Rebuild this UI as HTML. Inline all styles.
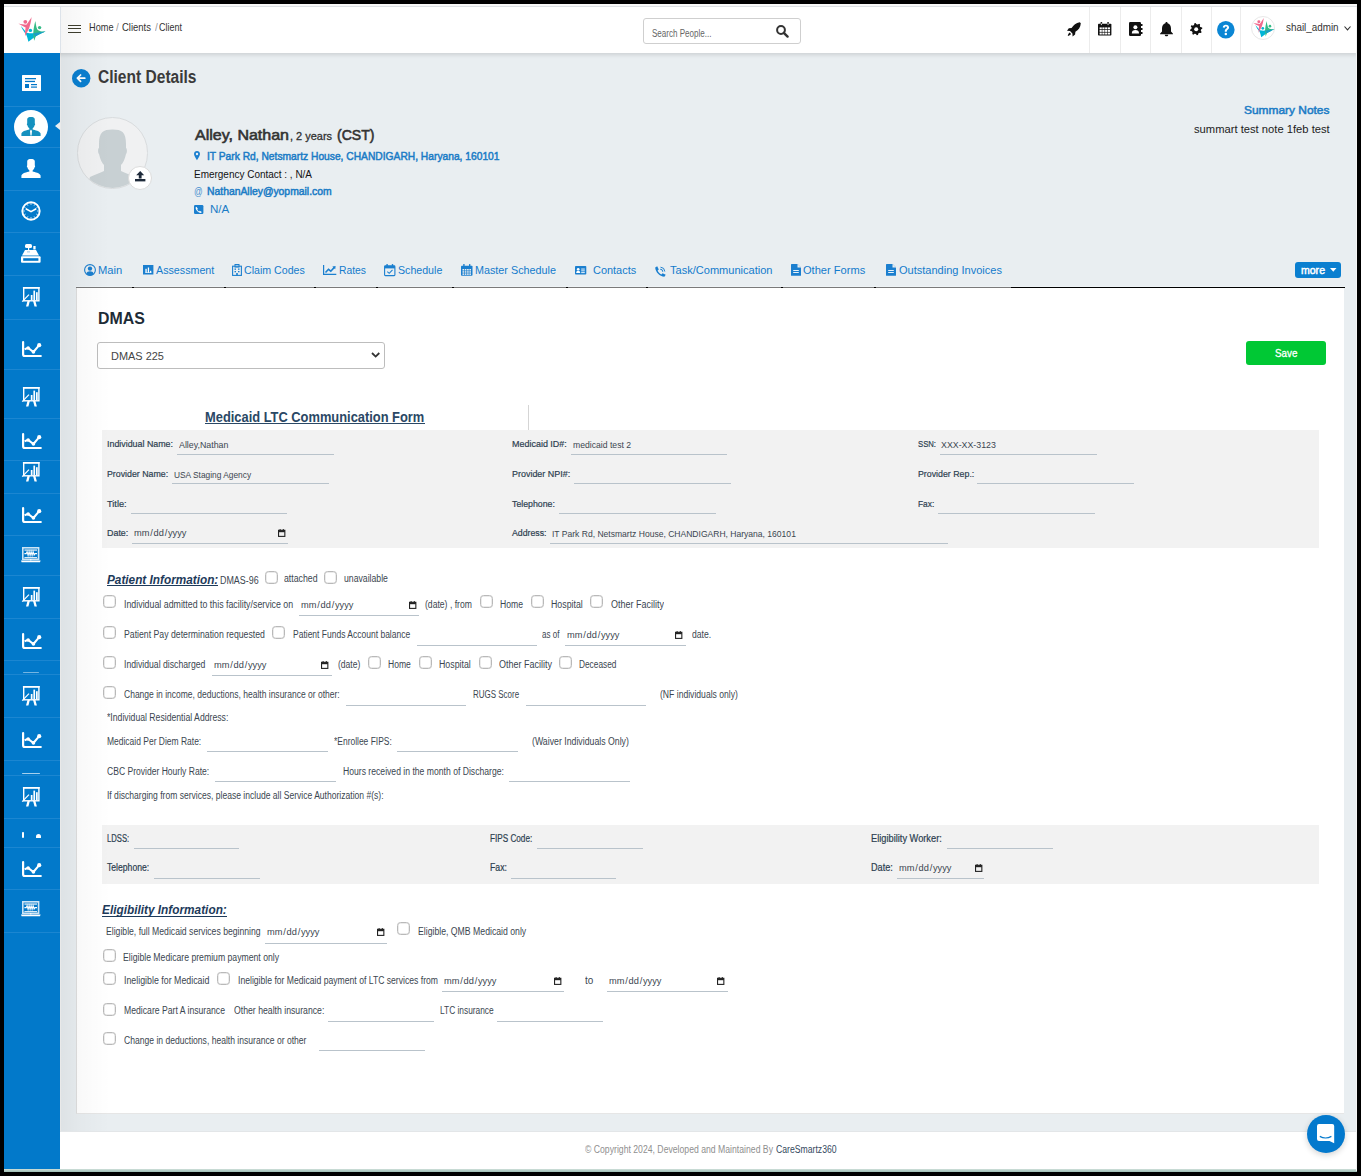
<!DOCTYPE html>
<html><head><meta charset="utf-8"><style>
html,body{margin:0;padding:0;}
body{width:1361px;height:1176px;position:relative;overflow:hidden;background:#000;font-family:"Liberation Sans", sans-serif;}
.a{position:absolute;}
.t{position:absolute;white-space:nowrap;line-height:normal;transform-origin:0 0;display:inline-block;}
.cb{border:1px solid #b9b9b9;border-radius:3.5px;background:#fff;box-shadow:inset 0 0 0 0.5px #d8d8d8;}
svg{overflow:visible;}
</style></head><body>
<div class="a" style="left:4.00px;top:4.00px;width:1353.00px;height:1167.00px;background:#e9eef1;"></div>
<div class="a" style="left:4.00px;top:4.00px;width:1353.00px;height:2.00px;background:#fafafa;"></div>
<div class="a" style="left:4.00px;top:6.00px;width:1353.00px;height:1.00px;background:#dde1e4;z-index:8;"></div>
<div class="a" style="left:4.00px;top:6.00px;width:1353.00px;height:47.00px;background:#ffffff;box-shadow:0 2px 4px rgba(0,0,0,0.12);z-index:2;"></div>
<div class="a" style="left:4.00px;top:6.00px;width:56.00px;height:47.00px;background:#ffffff;z-index:3;"></div>
<div class="a" style="left:59.50px;top:6.00px;width:1.00px;height:47.00px;background:#dde3ea;z-index:3;"></div>
<div class="a" style="left:4.00px;top:53.00px;width:56.00px;height:1116.00px;background:#0279ca;z-index:3;"></div>
<div class="a" style="left:60.00px;top:1131.00px;width:1297.00px;height:38.00px;background:#ffffff;"></div>
<div class="a" style="left:60.00px;top:1131.00px;width:1297.00px;height:1.00px;background:#e3e6e8;"></div>
<div class="a" style="left:4.00px;top:1169.00px;width:1353.00px;height:3.00px;background:linear-gradient(#cfe0da, #9dbdb4);z-index:4;"></div>
<div class="a" style="left:76.00px;top:288.00px;width:1268.00px;height:826.00px;background:#ffffff;box-sizing:border-box;border-left:1px solid #dedede;border-bottom:1px solid #e6e6e6;"></div>
<div class="a" style="left:60.00px;top:53.00px;width:50.00px;height:1078.00px;background:linear-gradient(to right, rgba(0,0,0,0.05), rgba(0,0,0,0.025) 40%, rgba(0,0,0,0));z-index:1;"></div>
<div class="a" style="left:60.00px;top:53.00px;width:1.00px;height:1078.00px;background:#e9e9e9;z-index:1;"></div>
<div class="a" style="left:60.50px;top:7.00px;width:45.00px;height:46.00px;background:linear-gradient(to right, rgba(0,0,0,0.04), rgba(0,0,0,0));z-index:3;"></div>
<div class="a" style="left:76.00px;top:286.00px;width:1269.00px;height:1.00px;background:#eef3f6;"></div>
<div class="a" style="left:1356.00px;top:4.00px;width:1.00px;height:1167.00px;background:#f4f4f4;z-index:4;"></div>
<div class="a" style="left:4.00px;top:105.60px;width:56.00px;height:1.00px;background:#1b86d1;z-index:4;"></div>
<div class="a" style="left:4.00px;top:147.30px;width:56.00px;height:1.00px;background:#1b86d1;z-index:4;"></div>
<div class="a" style="left:4.00px;top:190.40px;width:56.00px;height:1.00px;background:#1b86d1;z-index:4;"></div>
<div class="a" style="left:4.00px;top:232.40px;width:56.00px;height:1.00px;background:#1b86d1;z-index:4;"></div>
<div class="a" style="left:4.00px;top:275.40px;width:56.00px;height:1.00px;background:#1b86d1;z-index:4;"></div>
<div class="a" style="left:4.00px;top:318.50px;width:56.00px;height:1.00px;background:#1b86d1;z-index:4;"></div>
<div class="a" style="left:4.00px;top:369.00px;width:56.00px;height:1.00px;background:#1b86d1;z-index:4;"></div>
<div class="a" style="left:4.00px;top:418.00px;width:56.00px;height:1.00px;background:#1b86d1;z-index:4;"></div>
<div class="a" style="left:4.00px;top:460.40px;width:56.00px;height:1.00px;background:#1b86d1;z-index:4;"></div>
<div class="a" style="left:4.00px;top:493.40px;width:56.00px;height:1.00px;background:#1b86d1;z-index:4;"></div>
<div class="a" style="left:4.00px;top:535.20px;width:56.00px;height:1.00px;background:#1b86d1;z-index:4;"></div>
<div class="a" style="left:4.00px;top:575.00px;width:56.00px;height:1.00px;background:#1b86d1;z-index:4;"></div>
<div class="a" style="left:4.00px;top:618.00px;width:56.00px;height:1.00px;background:#1b86d1;z-index:4;"></div>
<div class="a" style="left:4.00px;top:660.00px;width:56.00px;height:1.00px;background:#1b86d1;z-index:4;"></div>
<div class="a" style="left:4.00px;top:674.00px;width:56.00px;height:1.00px;background:#1b86d1;z-index:4;"></div>
<div class="a" style="left:4.00px;top:717.00px;width:56.00px;height:1.00px;background:#1b86d1;z-index:4;"></div>
<div class="a" style="left:4.00px;top:760.00px;width:56.00px;height:1.00px;background:#1b86d1;z-index:4;"></div>
<div class="a" style="left:4.00px;top:775.00px;width:56.00px;height:1.00px;background:#1b86d1;z-index:4;"></div>
<div class="a" style="left:4.00px;top:818.00px;width:56.00px;height:1.00px;background:#1b86d1;z-index:4;"></div>
<div class="a" style="left:4.00px;top:847.00px;width:56.00px;height:1.00px;background:#1b86d1;z-index:4;"></div>
<div class="a" style="left:4.00px;top:889.00px;width:56.00px;height:1.00px;background:#1b86d1;z-index:4;"></div>
<div class="a" style="left:4.00px;top:932.00px;width:56.00px;height:1.00px;background:#1b86d1;z-index:4;"></div>
<svg class="a" style="left:22.00px;top:75.00px;z-index:5;" width="19" height="16" viewBox="0 0 19 16"><rect x="0" y="0" width="19" height="16" rx="0.5" fill="#fff"/><rect x="3" y="3" width="11" height="1.3" fill="#0277c9"/><rect x="3" y="5.8" width="10" height="1.3" fill="#0277c9"/><rect x="3" y="9" width="4" height="4" fill="#0277c9"/><rect x="9" y="9" width="6" height="1.2" fill="#0277c9"/><rect x="9" y="11.5" width="6" height="1.2" fill="#0277c9"/></svg>
<div class="a" style="left:14px;top:109.7px;width:34px;height:34px;border-radius:50%;background:#fff;z-index:5;"></div>
<svg class="a" style="left:21.30px;top:117.20px;z-index:5;" width="20" height="19" viewBox="0 0 20 19"><path d="M6.2,2.2 C6.2,0.6 8,0 10,0 C12,0 13.8,0.6 13.8,2.2 L13.8,6.5 C14.3,6.8 14.2,8 13.6,8.3 C13.2,10 12.2,11 11.6,11.5 L11.6,12.4 C14,13 19,14 19.6,16.5 L19.6,19 L0.4,19 L0.4,16.5 C1,14 6,13 8.4,12.4 L8.4,11.5 C7.8,11 6.8,10 6.4,8.3 C5.8,8 5.7,6.8 6.2,6.5 Z" fill="#1591bf"/><path d="M10,12.6 L11,14 L10.6,18 L10,19 L9.4,18 L9,14 Z" fill="#fff"/></svg>
<svg class="a" style="left:55.00px;top:122.00px;z-index:5;" width="5" height="8" viewBox="0 0 5 8"><path d="M0,4 L5,0 L5,8 Z" fill="#e9eef1"/></svg>
<svg class="a" style="left:21.00px;top:159.00px;z-index:5;" width="20" height="19" viewBox="0 0 20 19"><path d="M6.2,2.2 C6.2,0.6 8,0 10,0 C12,0 13.8,0.6 13.8,2.2 L13.8,6.5 C14.3,6.8 14.2,8 13.6,8.3 C13.2,10 12.2,11 11.6,11.5 L11.6,12.4 C14,13 19,14 19.6,16.5 L19.6,19 L0.4,19 L0.4,16.5 C1,14 6,13 8.4,12.4 L8.4,11.5 C7.8,11 6.8,10 6.4,8.3 C5.8,8 5.7,6.8 6.2,6.5 Z" fill="#fff"/></svg>
<svg class="a" style="left:20.60px;top:201.00px;z-index:5;" width="20" height="20" viewBox="0 0 20 20"><circle cx="10" cy="10" r="8.7" fill="none" stroke="#fff" stroke-width="1.9"/><line x1="10.00" y1="2.40" x2="10.00" y2="3.70" stroke="#fff" stroke-width="1"/><line x1="13.80" y1="3.42" x2="13.15" y2="4.54" stroke="#fff" stroke-width="1"/><line x1="16.58" y1="6.20" x2="15.46" y2="6.85" stroke="#fff" stroke-width="1"/><line x1="17.60" y1="10.00" x2="16.30" y2="10.00" stroke="#fff" stroke-width="1"/><line x1="16.58" y1="13.80" x2="15.46" y2="13.15" stroke="#fff" stroke-width="1"/><line x1="13.80" y1="16.58" x2="13.15" y2="15.46" stroke="#fff" stroke-width="1"/><line x1="10.00" y1="17.60" x2="10.00" y2="16.30" stroke="#fff" stroke-width="1"/><line x1="6.20" y1="16.58" x2="6.85" y2="15.46" stroke="#fff" stroke-width="1"/><line x1="3.42" y1="13.80" x2="4.54" y2="13.15" stroke="#fff" stroke-width="1"/><line x1="2.40" y1="10.00" x2="3.70" y2="10.00" stroke="#fff" stroke-width="1"/><line x1="3.42" y1="6.20" x2="4.54" y2="6.85" stroke="#fff" stroke-width="1"/><line x1="6.20" y1="3.42" x2="6.85" y2="4.54" stroke="#fff" stroke-width="1"/><path d="M4.8,7.8 L10,10.6 L15.2,7.8" fill="none" stroke="#fff" stroke-width="1.6"/></svg>
<svg class="a" style="left:21.20px;top:244.00px;z-index:5;" width="20" height="19" viewBox="0 0 20 19"><rect x="4" y="0" width="7" height="4" rx="1.5" fill="#fff"/><rect x="12.3" y="2" width="2.3" height="3.5" fill="#fff"/><rect x="7" y="4" width="1.2" height="2" fill="#fff"/><path d="M4,6 L15,6 L18,11.5 L1,11.5 Z" fill="#fff"/><rect x="6" y="7.5" width="3" height="0.8" fill="#0277c9" opacity="0.5"/><rect x="0" y="12.3" width="19.6" height="6.4" rx="1" fill="#fff"/><rect x="2.2" y="14.2" width="15.2" height="2.6" fill="#0277c9"/></svg>
<svg class="a" style="left:22.00px;top:286.60px;z-index:5;" width="18" height="19.5" viewBox="0 0 18 19.5"><rect x="1.7" y="0.8" width="15.2" height="13" fill="none" stroke="#fff" stroke-width="1.4"/><rect x="0.9" y="0" width="16.8" height="1.6" fill="#fff"/><rect x="8.8" y="8" width="1.7" height="5.2" fill="#fff"/><rect x="11.4" y="3.6" width="1.7" height="9.6" fill="#fff"/><rect x="14" y="5.2" width="1.7" height="8" fill="#fff"/><path d="M0.2,14.6 L7,7.6" stroke="#fff" stroke-width="1.2"/><path d="M5.6,13.8 L4,19.4 L6.4,19.4 L7.9,13.8 Z M11,13.8 L12.5,19.4 L14.9,19.4 L13.3,13.8 Z" fill="#fff"/></svg>
<svg class="a" style="left:22.00px;top:387.10px;z-index:5;" width="18" height="19.5" viewBox="0 0 18 19.5"><rect x="1.7" y="0.8" width="15.2" height="13" fill="none" stroke="#fff" stroke-width="1.4"/><rect x="0.9" y="0" width="16.8" height="1.6" fill="#fff"/><rect x="8.8" y="8" width="1.7" height="5.2" fill="#fff"/><rect x="11.4" y="3.6" width="1.7" height="9.6" fill="#fff"/><rect x="14" y="5.2" width="1.7" height="8" fill="#fff"/><path d="M0.2,14.6 L7,7.6" stroke="#fff" stroke-width="1.2"/><path d="M5.6,13.8 L4,19.4 L6.4,19.4 L7.9,13.8 Z M11,13.8 L12.5,19.4 L14.9,19.4 L13.3,13.8 Z" fill="#fff"/></svg>
<svg class="a" style="left:22.00px;top:461.90px;z-index:5;" width="18" height="19.5" viewBox="0 0 18 19.5"><rect x="1.7" y="0.8" width="15.2" height="13" fill="none" stroke="#fff" stroke-width="1.4"/><rect x="0.9" y="0" width="16.8" height="1.6" fill="#fff"/><rect x="8.8" y="8" width="1.7" height="5.2" fill="#fff"/><rect x="11.4" y="3.6" width="1.7" height="9.6" fill="#fff"/><rect x="14" y="5.2" width="1.7" height="8" fill="#fff"/><path d="M0.2,14.6 L7,7.6" stroke="#fff" stroke-width="1.2"/><path d="M5.6,13.8 L4,19.4 L6.4,19.4 L7.9,13.8 Z M11,13.8 L12.5,19.4 L14.9,19.4 L13.3,13.8 Z" fill="#fff"/></svg>
<svg class="a" style="left:22.00px;top:586.60px;z-index:5;" width="18" height="19.5" viewBox="0 0 18 19.5"><rect x="1.7" y="0.8" width="15.2" height="13" fill="none" stroke="#fff" stroke-width="1.4"/><rect x="0.9" y="0" width="16.8" height="1.6" fill="#fff"/><rect x="8.8" y="8" width="1.7" height="5.2" fill="#fff"/><rect x="11.4" y="3.6" width="1.7" height="9.6" fill="#fff"/><rect x="14" y="5.2" width="1.7" height="8" fill="#fff"/><path d="M0.2,14.6 L7,7.6" stroke="#fff" stroke-width="1.2"/><path d="M5.6,13.8 L4,19.4 L6.4,19.4 L7.9,13.8 Z M11,13.8 L12.5,19.4 L14.9,19.4 L13.3,13.8 Z" fill="#fff"/></svg>
<svg class="a" style="left:22.00px;top:685.80px;z-index:5;" width="18" height="19.5" viewBox="0 0 18 19.5"><rect x="1.7" y="0.8" width="15.2" height="13" fill="none" stroke="#fff" stroke-width="1.4"/><rect x="0.9" y="0" width="16.8" height="1.6" fill="#fff"/><rect x="8.8" y="8" width="1.7" height="5.2" fill="#fff"/><rect x="11.4" y="3.6" width="1.7" height="9.6" fill="#fff"/><rect x="14" y="5.2" width="1.7" height="8" fill="#fff"/><path d="M0.2,14.6 L7,7.6" stroke="#fff" stroke-width="1.2"/><path d="M5.6,13.8 L4,19.4 L6.4,19.4 L7.9,13.8 Z M11,13.8 L12.5,19.4 L14.9,19.4 L13.3,13.8 Z" fill="#fff"/></svg>
<svg class="a" style="left:22.00px;top:787.10px;z-index:5;" width="18" height="19.5" viewBox="0 0 18 19.5"><rect x="1.7" y="0.8" width="15.2" height="13" fill="none" stroke="#fff" stroke-width="1.4"/><rect x="0.9" y="0" width="16.8" height="1.6" fill="#fff"/><rect x="8.8" y="8" width="1.7" height="5.2" fill="#fff"/><rect x="11.4" y="3.6" width="1.7" height="9.6" fill="#fff"/><rect x="14" y="5.2" width="1.7" height="8" fill="#fff"/><path d="M0.2,14.6 L7,7.6" stroke="#fff" stroke-width="1.2"/><path d="M5.6,13.8 L4,19.4 L6.4,19.4 L7.9,13.8 Z M11,13.8 L12.5,19.4 L14.9,19.4 L13.3,13.8 Z" fill="#fff"/></svg>
<svg class="a" style="left:21.90px;top:341.40px;z-index:5;" width="19.5" height="16.5" viewBox="0 0 19.5 16.5"><path d="M1.1,1 L1.1,13.2 Q1.1,15 2.9,15 L18.8,15" fill="none" stroke="#fff" stroke-width="2.2" stroke-linecap="round" stroke-linejoin="round"/><path d="M2.6,8.2 L6.1,6.9 L11.4,11 L17,4.4" fill="none" stroke="#fff" stroke-width="2" stroke-linejoin="round"/><circle cx="6.1" cy="7" r="1.8" fill="#fff"/><circle cx="11.4" cy="10.9" r="1.8" fill="#fff"/><circle cx="17.2" cy="4.2" r="2.1" fill="#fff"/></svg>
<svg class="a" style="left:21.90px;top:432.70px;z-index:5;" width="19.5" height="16.5" viewBox="0 0 19.5 16.5"><path d="M1.1,1 L1.1,13.2 Q1.1,15 2.9,15 L18.8,15" fill="none" stroke="#fff" stroke-width="2.2" stroke-linecap="round" stroke-linejoin="round"/><path d="M2.6,8.2 L6.1,6.9 L11.4,11 L17,4.4" fill="none" stroke="#fff" stroke-width="2" stroke-linejoin="round"/><circle cx="6.1" cy="7" r="1.8" fill="#fff"/><circle cx="11.4" cy="10.9" r="1.8" fill="#fff"/><circle cx="17.2" cy="4.2" r="2.1" fill="#fff"/></svg>
<svg class="a" style="left:21.90px;top:507.30px;z-index:5;" width="19.5" height="16.5" viewBox="0 0 19.5 16.5"><path d="M1.1,1 L1.1,13.2 Q1.1,15 2.9,15 L18.8,15" fill="none" stroke="#fff" stroke-width="2.2" stroke-linecap="round" stroke-linejoin="round"/><path d="M2.6,8.2 L6.1,6.9 L11.4,11 L17,4.4" fill="none" stroke="#fff" stroke-width="2" stroke-linejoin="round"/><circle cx="6.1" cy="7" r="1.8" fill="#fff"/><circle cx="11.4" cy="10.9" r="1.8" fill="#fff"/><circle cx="17.2" cy="4.2" r="2.1" fill="#fff"/></svg>
<svg class="a" style="left:21.90px;top:632.60px;z-index:5;" width="19.5" height="16.5" viewBox="0 0 19.5 16.5"><path d="M1.1,1 L1.1,13.2 Q1.1,15 2.9,15 L18.8,15" fill="none" stroke="#fff" stroke-width="2.2" stroke-linecap="round" stroke-linejoin="round"/><path d="M2.6,8.2 L6.1,6.9 L11.4,11 L17,4.4" fill="none" stroke="#fff" stroke-width="2" stroke-linejoin="round"/><circle cx="6.1" cy="7" r="1.8" fill="#fff"/><circle cx="11.4" cy="10.9" r="1.8" fill="#fff"/><circle cx="17.2" cy="4.2" r="2.1" fill="#fff"/></svg>
<svg class="a" style="left:21.90px;top:732.40px;z-index:5;" width="19.5" height="16.5" viewBox="0 0 19.5 16.5"><path d="M1.1,1 L1.1,13.2 Q1.1,15 2.9,15 L18.8,15" fill="none" stroke="#fff" stroke-width="2.2" stroke-linecap="round" stroke-linejoin="round"/><path d="M2.6,8.2 L6.1,6.9 L11.4,11 L17,4.4" fill="none" stroke="#fff" stroke-width="2" stroke-linejoin="round"/><circle cx="6.1" cy="7" r="1.8" fill="#fff"/><circle cx="11.4" cy="10.9" r="1.8" fill="#fff"/><circle cx="17.2" cy="4.2" r="2.1" fill="#fff"/></svg>
<svg class="a" style="left:21.90px;top:861.30px;z-index:5;" width="19.5" height="16.5" viewBox="0 0 19.5 16.5"><path d="M1.1,1 L1.1,13.2 Q1.1,15 2.9,15 L18.8,15" fill="none" stroke="#fff" stroke-width="2.2" stroke-linecap="round" stroke-linejoin="round"/><path d="M2.6,8.2 L6.1,6.9 L11.4,11 L17,4.4" fill="none" stroke="#fff" stroke-width="2" stroke-linejoin="round"/><circle cx="6.1" cy="7" r="1.8" fill="#fff"/><circle cx="11.4" cy="10.9" r="1.8" fill="#fff"/><circle cx="17.2" cy="4.2" r="2.1" fill="#fff"/></svg>
<svg class="a" style="left:21.20px;top:546.90px;z-index:5;" width="20" height="16" viewBox="0 0 20 16"><rect x="1.8" y="0.8" width="15.8" height="11.5" fill="none" stroke="#fff" stroke-width="1.6" opacity="0.8"/><rect x="3.4" y="2.5" width="12.6" height="1.1" fill="#fff"/><rect x="3.4" y="10" width="12.6" height="1.1" fill="#fff" opacity="0.85"/><path d="M3.4,6.6 L5.2,6.6 L6.1,4.6 L7.1,8.4 L8.1,4.6 L9.1,8.4 L10.1,4.6 L11.1,8.4 L12.1,4.6 L13.1,8 L14,6.6 L16,6.6" fill="none" stroke="#fff" stroke-width="1.05"/><rect x="9.3" y="12" width="1" height="1.5" fill="#fff"/><path d="M0,13.5 L19.6,13.5 L19,15.2 L0.6,15.2 Z" fill="#fff"/></svg>
<svg class="a" style="left:21.20px;top:901.10px;z-index:5;" width="20" height="16" viewBox="0 0 20 16"><rect x="1.8" y="0.8" width="15.8" height="11.5" fill="none" stroke="#fff" stroke-width="1.6" opacity="0.8"/><rect x="3.4" y="2.5" width="12.6" height="1.1" fill="#fff"/><rect x="3.4" y="10" width="12.6" height="1.1" fill="#fff" opacity="0.85"/><path d="M3.4,6.6 L5.2,6.6 L6.1,4.6 L7.1,8.4 L8.1,4.6 L9.1,8.4 L10.1,4.6 L11.1,8.4 L12.1,4.6 L13.1,8 L14,6.6 L16,6.6" fill="none" stroke="#fff" stroke-width="1.05"/><rect x="9.3" y="12" width="1" height="1.5" fill="#fff"/><path d="M0,13.5 L19.6,13.5 L19,15.2 L0.6,15.2 Z" fill="#fff"/></svg>
<div class="a" style="left:23.00px;top:672.00px;width:16.00px;height:1.20px;background:#fff;z-index:5;opacity:0.45;border-radius:1px;"></div>
<div class="a" style="left:22.00px;top:772.60px;width:18.00px;height:1.40px;background:#fff;z-index:5;opacity:0.65;border-radius:1px;"></div>
<div class="a" style="left:21.8px;top:832px;width:2.6px;height:6px;border-radius:1px 1px 1.3px 1.3px;background:#fff;z-index:5;"></div>
<div class="a" style="left:36px;top:834px;width:5px;height:4px;border-radius:2.5px 2.5px 0.5px 0.5px;background:#fff;z-index:5;"></div>
<div class="a" style="left:68.20px;top:24.65px;width:12.50px;height:1.30px;background:#3d3d2d;z-index:5;"></div>
<div class="a" style="left:68.20px;top:28.05px;width:12.50px;height:1.30px;background:#3d3d2d;z-index:5;"></div>
<div class="a" style="left:68.20px;top:31.65px;width:12.50px;height:1.30px;background:#3d3d2d;z-index:5;"></div>
<span class="t" id="t0" style="left:88.50px;top:21.88px;font-size:10.30px;font-weight:400;color:#333;transform:scaleX(0.8919);z-index:5;">Home</span>
<span class="t" id="t1" style="left:116.30px;top:21.88px;font-size:10.30px;font-weight:400;color:#9a9a9a;transform:scaleX(0.9739);z-index:5;">/</span>
<span class="t" id="t2" style="left:122.40px;top:21.88px;font-size:10.30px;font-weight:400;color:#333;transform:scaleX(0.9179);z-index:5;">Clients</span>
<span class="t" id="t3" style="left:154.50px;top:21.88px;font-size:10.30px;font-weight:400;color:#9a9a9a;transform:scaleX(0.9739);z-index:5;">/</span>
<span class="t" id="t4" style="left:159.10px;top:21.88px;font-size:10.30px;font-weight:400;color:#333;transform:scaleX(0.8698);z-index:5;">Client</span>
<div class="a" style="left:642.5px;top:17.5px;width:156px;height:24px;border:1px solid #cfcfcf;border-radius:3px;background:#fff;z-index:5;"></div>
<span class="t" id="t5" style="left:651.50px;top:28.05px;font-size:10.00px;font-weight:400;color:#666;transform:scaleX(0.8047);z-index:5;">Search People...</span>
<div class="a" style="left:1089.00px;top:6.00px;width:1.00px;height:47.00px;background:#ececec;z-index:5;"></div>
<div class="a" style="left:1120.00px;top:6.00px;width:1.00px;height:47.00px;background:#ececec;z-index:5;"></div>
<div class="a" style="left:1150.00px;top:6.00px;width:1.00px;height:47.00px;background:#ececec;z-index:5;"></div>
<div class="a" style="left:1181.00px;top:6.00px;width:1.00px;height:47.00px;background:#ececec;z-index:5;"></div>
<div class="a" style="left:1211.00px;top:6.00px;width:1.00px;height:47.00px;background:#ececec;z-index:5;"></div>
<div class="a" style="left:1240.00px;top:6.00px;width:1.00px;height:47.00px;background:#ececec;z-index:5;"></div>
<span class="t" id="t6" style="left:1286.20px;top:21.95px;font-size:10.00px;font-weight:400;color:#333;transform:scaleX(0.9855);z-index:5;">shail_admin</span>
<svg class="a" style="left:1344.00px;top:26.40px;z-index:5;" width="7" height="4.4" viewBox="0 0 7 4.4"><path d="M0.5,0.5 L3.5,3.9 L6.5,0.5" fill="none" stroke="#333" stroke-width="1.1"/></svg>
<svg class="a" style="left:14.00px;top:12.00px;z-index:6;" width="36" height="36" viewBox="0 0 36 36"><g transform="scale(1)"><path d="M7,14.1 C9,16.5 11,19 12.8,20.8 C15,21.3 17,21.4 19,21.3 L31.5,19.6 C27,21.5 23,23.5 20,25.5 C18,27 16,28.5 14.4,29.7 C13.8,27 13,24.5 12.2,22.5 C10,20 8,17 7,14.1 Z" fill="#00b4d6"/><circle cx="16.4" cy="18.4" r="1.7" fill="#00b4d6"/><path d="M21.4,8.9 C21.8,12 22.3,15 23.2,17.3 C24.5,18.7 26,19.3 28,19.5 L31.5,19.6 C28,20.8 25,22 22.2,23 C21.5,25 20.8,27 20.2,28.8 C19.6,26 19.3,23 19.3,20.5 C19.6,16.5 20.3,12.5 21.4,8.9 Z" fill="#34bb87"/><path d="M19.4,21.2 L31.5,19.6 C27,21.5 24,23 21.2,24.6 Z" fill="#1b9fc4"/><circle cx="25.6" cy="15.6" r="1.7" fill="#34bb87"/><path d="M4.3,11.6 C7,12.3 10,12.6 12.3,12.8 C14.5,10 16.5,7 17.6,5 C17.2,9 16.3,13 15,16.5 C13.5,19.5 12,22 11,24.2 C11,21 11.3,18 11.6,15.5 C9,14.5 6.5,13 4.3,11.6 Z" fill="#f06a8e"/><circle cx="11.3" cy="9.8" r="1.9" fill="#f06a8e"/></g></svg>
<div class="a" style="left:1251px;top:16.2px;width:22px;height:22px;border:1px solid #e8e8e8;border-radius:50%;background:#fff;z-index:5;"></div>
<svg class="a" style="left:1249.50px;top:14.10px;z-index:6;" width="28.08" height="28.08" viewBox="0 0 28.08 28.08"><g transform="scale(0.78)"><path d="M7,14.1 C9,16.5 11,19 12.8,20.8 C15,21.3 17,21.4 19,21.3 L31.5,19.6 C27,21.5 23,23.5 20,25.5 C18,27 16,28.5 14.4,29.7 C13.8,27 13,24.5 12.2,22.5 C10,20 8,17 7,14.1 Z" fill="#00b4d6"/><circle cx="16.4" cy="18.4" r="1.7" fill="#00b4d6"/><path d="M21.4,8.9 C21.8,12 22.3,15 23.2,17.3 C24.5,18.7 26,19.3 28,19.5 L31.5,19.6 C28,20.8 25,22 22.2,23 C21.5,25 20.8,27 20.2,28.8 C19.6,26 19.3,23 19.3,20.5 C19.6,16.5 20.3,12.5 21.4,8.9 Z" fill="#34bb87"/><path d="M19.4,21.2 L31.5,19.6 C27,21.5 24,23 21.2,24.6 Z" fill="#1b9fc4"/><circle cx="25.6" cy="15.6" r="1.7" fill="#34bb87"/><path d="M4.3,11.6 C7,12.3 10,12.6 12.3,12.8 C14.5,10 16.5,7 17.6,5 C17.2,9 16.3,13 15,16.5 C13.5,19.5 12,22 11,24.2 C11,21 11.3,18 11.6,15.5 C9,14.5 6.5,13 4.3,11.6 Z" fill="#f06a8e"/><circle cx="11.3" cy="9.8" r="1.9" fill="#f06a8e"/></g></svg>
<svg class="a" style="left:1067.00px;top:21.90px;z-index:5;" width="14" height="14.6" viewBox="0 0 14 14.6"><path d="M12.8,0.2 C9,0.6 6.5,3 4.6,6 L1.8,6.3 L0,8.8 L3,9 L5.4,11.4 L5.6,14.4 L8.1,12.6 L8.4,9.8 C11.4,7.9 13.6,5.4 13.8,1.2 Z M2.8,10.6 C1.6,11.2 1,12.6 0.8,13.9 C2,13.7 3.4,13.1 4,11.9 Z" fill="#111"/></svg>
<svg class="a" style="left:1098.00px;top:22.20px;z-index:5;" width="13.4" height="13.5" viewBox="0 0 13.4 13.5"><rect x="0" y="1.8" width="13.4" height="11.7" rx="0.8" fill="#111"/><rect x="1.60" y="5.40" width="2.2" height="1.9" fill="#fff"/><rect x="1.60" y="8.00" width="2.2" height="1.9" fill="#fff"/><rect x="1.60" y="10.60" width="2.2" height="1.9" fill="#fff"/><rect x="4.35" y="5.40" width="2.2" height="1.9" fill="#fff"/><rect x="4.35" y="8.00" width="2.2" height="1.9" fill="#fff"/><rect x="4.35" y="10.60" width="2.2" height="1.9" fill="#fff"/><rect x="7.10" y="5.40" width="2.2" height="1.9" fill="#fff"/><rect x="7.10" y="8.00" width="2.2" height="1.9" fill="#fff"/><rect x="7.10" y="10.60" width="2.2" height="1.9" fill="#fff"/><rect x="9.85" y="5.40" width="2.2" height="1.9" fill="#fff"/><rect x="9.85" y="8.00" width="2.2" height="1.9" fill="#fff"/><rect x="9.85" y="10.60" width="2.2" height="1.9" fill="#fff"/><rect x="2.6" y="0" width="1.5" height="3.5" rx="0.5" fill="#111"/><rect x="9.3" y="0" width="1.5" height="3.5" rx="0.5" fill="#111"/><rect x="2.9" y="1.5" width="0.9" height="1.6" fill="#fff"/><rect x="9.6" y="1.5" width="0.9" height="1.6" fill="#fff"/></svg>
<svg class="a" style="left:1128.90px;top:21.90px;z-index:5;" width="13.5" height="14" viewBox="0 0 13.5 14"><rect x="0" y="0" width="12" height="14" rx="1.2" fill="#111"/><rect x="12" y="2" width="1.5" height="2" fill="#111"/><rect x="12" y="6" width="1.5" height="2" fill="#111"/><rect x="12" y="10" width="1.5" height="2" fill="#111"/><circle cx="6.4" cy="5.2" r="2" fill="#fff"/><path d="M2.8,11.4 C2.8,8.8 4.2,8 6.4,8 C8.6,8 10,8.8 10,11.4 Z" fill="#fff"/></svg>
<svg class="a" style="left:1159.50px;top:21.90px;z-index:5;" width="13" height="14.3" viewBox="0 0 13 14.3"><path d="M6.5,0 C7.3,0 7.6,0.6 7.6,1.3 C10,1.9 11,4 11,6.5 L11,9.5 L13,11.8 L13,12.3 L0,12.3 L0,11.8 L2,9.5 L2,6.5 C2,4 3,1.9 5.4,1.3 C5.4,0.6 5.7,0 6.5,0 Z M4.8,12.8 L8.2,12.8 C8.2,14 7.4,14.3 6.5,14.3 C5.6,14.3 4.8,14 4.8,12.8 Z" fill="#111"/></svg>
<svg class="a" style="left:1190.40px;top:22.80px;z-index:5;" width="12.4" height="12.4" viewBox="0 0 12.4 12.4"><polygon points="12.13,4.40 12.37,5.59 10.78,6.65 10.60,7.54 11.67,9.12 10.99,10.13 9.12,9.76 8.37,10.26 8.00,12.13 6.81,12.37 5.75,10.78 4.86,10.60 3.28,11.67 2.27,10.99 2.64,9.12 2.14,8.37 0.27,8.00 0.03,6.81 1.62,5.75 1.80,4.86 0.73,3.28 1.41,2.27 3.28,2.64 4.03,2.14 4.40,0.27 5.59,0.03 6.65,1.62 7.54,1.80 9.12,0.73 10.13,1.41 9.76,3.28 10.26,4.03" fill="#111"/><circle cx="6.2" cy="6.2" r="4.6" fill="#111"/><circle cx="6.2" cy="6.2" r="2" fill="#fff"/></svg>
<svg class="a" style="left:1217.40px;top:20.80px;z-index:5;" width="17.6" height="17.6" viewBox="0 0 17.6 17.6"><circle cx="8.8" cy="8.8" r="8.8" fill="#0b86d4"/><path d="M5.8,6.6 C5.8,4.6 7.2,3.7 8.9,3.7 C10.8,3.7 12.1,4.8 12.1,6.5 C12.1,8.6 9.8,8.7 9.8,10.3 L9.8,10.8 L7.8,10.8 L7.8,10.1 C7.8,7.8 10,7.9 10,6.6 C10,5.9 9.5,5.5 8.9,5.5 C8.2,5.5 7.8,6 7.8,6.8 Z" fill="#fff"/><circle cx="8.8" cy="13" r="1.25" fill="#fff"/></svg>
<svg class="a" style="left:775.50px;top:25.00px;z-index:5;" width="12.5" height="12.5" viewBox="0 0 12.5 12.5"><circle cx="5" cy="5" r="3.9" fill="none" stroke="#333" stroke-width="2"/><path d="M7.8,7.8 L11.6,11.6" stroke="#333" stroke-width="2.4" stroke-linecap="round"/></svg>
<span class="t" id="t7" style="left:97.50px;top:67.16px;font-size:17.50px;font-weight:700;color:#3a3a3a;transform:scaleX(0.8884);">Client Details</span>
<span class="t" id="t8" style="left:194.60px;top:126.33px;font-size:15.00px;font-weight:400;color:#333;transform:scaleX(1.0669);-webkit-text-stroke:0.6px currentColor;">Alley, Nathan</span>
<span class="t" id="t9" style="left:290.00px;top:129.94px;font-size:11.00px;font-weight:400;color:#333;transform:scaleX(0.9956);-webkit-text-stroke:0.3px currentColor;">, 2 years</span>
<span class="t" id="t10" style="left:336.50px;top:126.33px;font-size:15.00px;font-weight:400;color:#333;transform:scaleX(0.9375);-webkit-text-stroke:0.6px currentColor;">(CST)</span>
<span class="t" id="t11" style="left:206.60px;top:149.64px;font-size:11.00px;font-weight:400;color:#1b7cc6;transform:scaleX(0.9314);-webkit-text-stroke:0.5px currentColor;">IT Park Rd, Netsmartz House, CHANDIGARH, Haryana, 160101</span>
<span class="t" id="t12" style="left:194.00px;top:167.54px;font-size:11.00px;font-weight:400;color:#111;transform:scaleX(0.9062);">Emergency Contact : , N/A</span>
<span class="t" id="t13" style="left:207.40px;top:184.90px;font-size:10.50px;font-weight:400;color:#1b7cc6;transform:scaleX(0.9872);-webkit-text-stroke:0.5px currentColor;">NathanAlley@yopmail.com</span>
<span class="t" id="t14" style="left:209.70px;top:203.24px;font-size:11.00px;font-weight:400;color:#1b7cc6;transform:scaleX(1.0521);">N/A</span>
<svg class="a" style="left:71.80px;top:68.60px;" width="18.4" height="18.4" viewBox="0 0 18.4 18.4"><circle cx="9.2" cy="9.2" r="9.2" fill="#0a7fd0"/><path d="M12.8,9.2 L5.5,9.2 M8.6,6 L5.4,9.2 L8.6,12.4" fill="none" stroke="#fff" stroke-width="1.7" stroke-linecap="round" stroke-linejoin="round"/></svg>
<div class="a" style="left:76.5px;top:117px;width:69.5px;height:69.5px;border:1px solid #d9dcde;border-radius:50%;background:#f0f1f2;overflow:hidden;"><svg width="70" height="70" viewBox="0 0 70 70" style="position:absolute;left:0;top:0;"><path d="M21,26 C21,14 25,11.5 34.5,11.5 C44,11.5 48,14 48,26 L48,30 C49.2,30.5 49.2,35 48,36 C47,41 45,45 43,47 L43,53 C47,55 53,57 57,59 L62,75 L7,75 L12,59 C16,57 22,55 26,53 L26,47 C24,45 22,41 21,36 C19.8,35 19.8,30.5 21,30 Z" fill="#c8d0d3"/></svg></div>
<div class="a" style="left:128.3px;top:166.2px;width:22px;height:22px;border:1px solid #dcdcdc;border-radius:50%;background:#fff;"></div>
<svg class="a" style="left:134.80px;top:170.60px;" width="10.4" height="10.4" viewBox="0 0 10.4 10.4"><path d="M5.2,0 L9.2,4.2 L6.6,4.2 L6.6,7.4 L3.8,7.4 L3.8,4.2 L1.2,4.2 Z" fill="#1e2a3a"/><rect x="0" y="8" width="10.4" height="2.4" fill="#1e2a3a"/></svg>
<svg class="a" style="left:194.00px;top:150.60px;" width="6" height="9.2" viewBox="0 0 6 9.2"><path d="M3,0 C4.7,0 6,1.3 6,3 C6,4.8 3,9.2 3,9.2 C3,9.2 0,4.8 0,3 C0,1.3 1.3,0 3,0 Z M3,1.8 A1.2,1.2 0 1 0 3,4.2 A1.2,1.2 0 1 0 3,1.8 Z" fill="#1b7fcf" fill-rule="evenodd"/></svg>
<span class="t" id="t15" style="left:194.00px;top:184.90px;font-size:10.50px;font-weight:400;color:#4a90d0;transform:scaleX(0.8059);">@</span>
<svg class="a" style="left:194.00px;top:205.00px;" width="9.4" height="9" viewBox="0 0 9.4 9"><rect x="0" y="0" width="9.4" height="9" rx="1.2" fill="#1b7fcf"/><path d="M2.5,1.8 L3.9,3.9 L3.2,4.6 C3.7,5.5 4.3,6.1 5.1,6.5 L5.8,5.8 L7.8,7 L7,8 C4.4,8 1.6,5.2 1.6,2.6 Z" fill="#fff"/></svg>
<span class="t" id="t16" style="left:1244.00px;top:103.59px;font-size:11.50px;font-weight:400;color:#1b7cc6;transform:scaleX(1.0359);-webkit-text-stroke:0.5px currentColor;">Summary Notes</span>
<span class="t" id="t17" style="left:1193.70px;top:122.64px;font-size:11.00px;font-weight:400;color:#222;transform:scaleX(1.0180);">summart test note 1feb test</span>
<span class="t" id="t18" style="left:98.00px;top:262.60px;font-size:11.60px;font-weight:400;color:#137bcc;transform:scaleX(0.9626);">Main</span>
<span class="t" id="t19" style="left:155.60px;top:262.60px;font-size:11.60px;font-weight:400;color:#137bcc;transform:scaleX(0.9231);">Assessment</span>
<span class="t" id="t20" style="left:243.70px;top:262.60px;font-size:11.60px;font-weight:400;color:#137bcc;transform:scaleX(0.9160);">Claim Codes</span>
<span class="t" id="t21" style="left:339.00px;top:262.60px;font-size:11.60px;font-weight:400;color:#137bcc;transform:scaleX(0.8912);">Rates</span>
<span class="t" id="t22" style="left:398.00px;top:262.60px;font-size:11.60px;font-weight:400;color:#137bcc;transform:scaleX(0.9161);">Schedule</span>
<span class="t" id="t23" style="left:474.70px;top:262.60px;font-size:11.60px;font-weight:400;color:#137bcc;transform:scaleX(0.9299);">Master Schedule</span>
<span class="t" id="t24" style="left:593.20px;top:262.60px;font-size:11.60px;font-weight:400;color:#137bcc;transform:scaleX(0.9439);">Contacts</span>
<span class="t" id="t25" style="left:669.50px;top:262.60px;font-size:11.60px;font-weight:400;color:#137bcc;transform:scaleX(0.9525);">Task/Communication</span>
<span class="t" id="t26" style="left:803.30px;top:262.60px;font-size:11.60px;font-weight:400;color:#137bcc;transform:scaleX(0.9560);">Other Forms</span>
<span class="t" id="t27" style="left:898.60px;top:262.60px;font-size:11.60px;font-weight:400;color:#137bcc;transform:scaleX(0.9503);">Outstanding Invoices</span>
<svg class="a" style="left:83.60px;top:264.00px;" width="12" height="12" viewBox="0 0 12 12"><circle cx="6" cy="6" r="5.4" fill="none" stroke="#1b7fcf" stroke-width="1.1"/><circle cx="6" cy="4.6" r="2.2" fill="#1b7fcf"/><path d="M2.3,9.9 C2.8,7.9 4.2,7.3 6,7.3 C7.8,7.3 9.2,7.9 9.7,9.9 C8.7,10.9 7.4,11.4 6,11.4 C4.6,11.4 3.3,10.9 2.3,9.9 Z" fill="#1b7fcf"/></svg>
<svg class="a" style="left:142.50px;top:265.10px;" width="10.4" height="9.5" viewBox="0 0 10.4 9.5"><rect x="0" y="0" width="10.4" height="9.5" fill="#1b7fcf"/><rect x="2.4" y="3.8" width="1.3" height="4" fill="#fff"/><rect x="4.8" y="2.5" width="1.3" height="5.3" fill="#fff"/><rect x="7" y="5.8" width="1.3" height="2" fill="#fff"/><rect x="2.4" y="7.3" width="6" height="0.6" fill="#fff"/></svg>
<svg class="a" style="left:232.30px;top:264.00px;" width="10" height="12" viewBox="0 0 10 12"><rect x="0.6" y="2.2" width="8.8" height="9.2" fill="none" stroke="#1b7fcf" stroke-width="1.1"/><rect x="3" y="0.5" width="4" height="2.6" fill="none" stroke="#1b7fcf" stroke-width="1"/><rect x="2.5" y="4.5" width="1.5" height="1.3" fill="#1b7fcf"/><rect x="6" y="4.5" width="1.5" height="1.3" fill="#1b7fcf"/><rect x="2.5" y="7" width="1.5" height="1.3" fill="#1b7fcf"/><rect x="6" y="7" width="1.5" height="1.3" fill="#1b7fcf"/><rect x="4.2" y="9" width="1.6" height="2.4" fill="#1b7fcf"/></svg>
<svg class="a" style="left:323.00px;top:265.00px;" width="13.3" height="10" viewBox="0 0 13.3 10"><path d="M0.6,0 L0.6,9.4 L13.3,9.4" fill="none" stroke="#1b7fcf" stroke-width="1.2"/><path d="M2.5,7.5 L5.5,4.3 L7.8,6.2 L11.3,2.4" fill="none" stroke="#1b7fcf" stroke-width="1.6"/><path d="M9.3,1.5 L12.6,0.9 L12.2,4.3 Z" fill="#1b7fcf"/></svg>
<svg class="a" style="left:384.00px;top:264.30px;" width="11.5" height="12" viewBox="0 0 11.5 12"><rect x="0.6" y="1.9" width="10.3" height="9.7" rx="0.8" fill="none" stroke="#1b7fcf" stroke-width="1.1"/><rect x="0.6" y="1.9" width="10.3" height="2.5" fill="#1b7fcf"/><rect x="2.4" y="0" width="1.4" height="2.8" rx="0.5" fill="#1b7fcf"/><rect x="7.8" y="0" width="1.4" height="2.8" rx="0.5" fill="#1b7fcf"/><path d="M3.3,7.6 L5.2,9.3 L8.5,5.9" fill="none" stroke="#1b7fcf" stroke-width="1.1"/></svg>
<svg class="a" style="left:461.20px;top:264.30px;" width="11.5" height="12" viewBox="0 0 11.5 12"><rect x="0" y="1.8" width="11.5" height="10" rx="0.8" fill="#1b7fcf"/><rect x="1.50" y="5.00" width="1.6" height="1.5" fill="#eaeef1"/><rect x="1.50" y="7.20" width="1.6" height="1.5" fill="#eaeef1"/><rect x="1.50" y="9.40" width="1.6" height="1.5" fill="#eaeef1"/><rect x="3.80" y="5.00" width="1.6" height="1.5" fill="#eaeef1"/><rect x="3.80" y="7.20" width="1.6" height="1.5" fill="#eaeef1"/><rect x="3.80" y="9.40" width="1.6" height="1.5" fill="#eaeef1"/><rect x="6.10" y="5.00" width="1.6" height="1.5" fill="#eaeef1"/><rect x="6.10" y="7.20" width="1.6" height="1.5" fill="#eaeef1"/><rect x="6.10" y="9.40" width="1.6" height="1.5" fill="#eaeef1"/><rect x="8.40" y="5.00" width="1.6" height="1.5" fill="#eaeef1"/><rect x="8.40" y="7.20" width="1.6" height="1.5" fill="#eaeef1"/><rect x="8.40" y="9.40" width="1.6" height="1.5" fill="#eaeef1"/><rect x="2.2" y="0" width="1.4" height="2.8" rx="0.5" fill="#1b7fcf"/><rect x="8" y="0" width="1.4" height="2.8" rx="0.5" fill="#1b7fcf"/></svg>
<svg class="a" style="left:574.80px;top:266.10px;" width="11.3" height="8.6" viewBox="0 0 11.3 8.6"><rect x="0" y="0" width="11.3" height="8.6" rx="0.8" fill="#1b7fcf"/><circle cx="3.2" cy="3.2" r="1.3" fill="#fff"/><path d="M1.2,7 C1.2,5.3 2,4.8 3.2,4.8 C4.4,4.8 5.2,5.3 5.2,7 Z" fill="#fff"/><rect x="6.2" y="2.6" width="3.6" height="0.9" fill="#fff"/><rect x="6.2" y="4.4" width="3.6" height="0.9" fill="#fff"/><rect x="6.2" y="6.2" width="3.6" height="0.9" fill="#fff"/></svg>
<svg class="a" style="left:655.00px;top:265.50px;" width="11" height="11" viewBox="0 0 11 11"><path d="M2.2,0.3 L3.8,3.4 L2.6,4.6 C3.3,6.4 4.6,7.7 6.4,8.4 L7.6,7.2 L10.7,8.8 L9.4,10.8 C4.8,10.6 0.4,6.2 0.2,1.6 Z" fill="#1b7fcf"/><path d="M5.5,1.2 A4.5,4.5 0 0 1 9.8,5.5" fill="none" stroke="#1b7fcf" stroke-width="1"/><path d="M5.2,3.2 A2.6,2.6 0 0 1 7.8,5.8" fill="none" stroke="#1b7fcf" stroke-width="1"/></svg>
<svg class="a" style="left:790.70px;top:263.90px;" width="10" height="12" viewBox="0 0 10 12"><path d="M0,0.6 Q0,0 0.6,0 L6.5,0 L10,3.5 L10,11.2 Q10,11.8 9.4,11.8 L0.6,11.8 Q0,11.8 0,11.2 Z" fill="#1b7fcf"/><path d="M6.5,0 L6.5,3.5 L10,3.5 Z" fill="#eaeef1"/><rect x="2.2" y="6" width="5.6" height="0.9" fill="#fff"/><rect x="2.2" y="8" width="5.6" height="0.9" fill="#fff"/></svg>
<svg class="a" style="left:886.00px;top:263.90px;" width="10" height="12" viewBox="0 0 10 12"><path d="M0,0.6 Q0,0 0.6,0 L6.5,0 L10,3.5 L10,11.2 Q10,11.8 9.4,11.8 L0.6,11.8 Q0,11.8 0,11.2 Z" fill="#1b7fcf"/><path d="M6.5,0 L6.5,3.5 L10,3.5 Z" fill="#eaeef1"/><rect x="2.2" y="6" width="5.6" height="0.9" fill="#fff"/><rect x="2.2" y="8" width="5.6" height="0.9" fill="#fff"/></svg>
<div class="a" style="left:76.00px;top:287.00px;width:935.00px;height:1.00px;background:#7a7a7a;"></div>
<div class="a" style="left:1011.00px;top:287.00px;width:334.00px;height:1.00px;background:#000;"></div>
<div class="a" style="left:132.00px;top:287.00px;width:2.00px;height:1.00px;background:#000;"></div>
<div class="a" style="left:223.70px;top:287.00px;width:2.00px;height:1.00px;background:#000;"></div>
<div class="a" style="left:314.30px;top:287.00px;width:2.00px;height:1.00px;background:#000;"></div>
<div class="a" style="left:375.50px;top:287.00px;width:2.00px;height:1.00px;background:#000;"></div>
<div class="a" style="left:452.00px;top:287.00px;width:2.00px;height:1.00px;background:#000;"></div>
<div class="a" style="left:566.00px;top:287.00px;width:2.00px;height:1.00px;background:#000;"></div>
<div class="a" style="left:645.80px;top:287.00px;width:2.00px;height:1.00px;background:#000;"></div>
<div class="a" style="left:781.00px;top:287.00px;width:2.00px;height:1.00px;background:#000;"></div>
<div class="a" style="left:874.30px;top:287.00px;width:2.00px;height:1.00px;background:#000;"></div>
<div class="a" style="left:1295px;top:262px;width:46px;height:16px;background:#0a7fd0;border-radius:3px;"></div>
<span class="t" id="t28" style="left:1301.00px;top:264.00px;font-size:10.50px;font-weight:400;color:#fff;transform:scaleX(1.0026);-webkit-text-stroke:0.45px currentColor;">more</span>
<svg class="a" style="left:1330.00px;top:268.30px;" width="6.5" height="4" viewBox="0 0 6.5 4"><path d="M0,0 L6.5,0 L3.25,3.8 Z" fill="#fff"/></svg>
<span class="t" id="t29" style="left:97.60px;top:308.72px;font-size:17.00px;font-weight:700;color:#1d2b36;transform:scaleX(0.9348);">DMAS</span>
<div class="a" style="left:97px;top:342px;width:286px;height:24.5px;border:1px solid #bdbdbd;border-radius:3px;background:#fff;"></div>
<span class="t" id="t30" style="left:111.00px;top:349.59px;font-size:11.50px;font-weight:400;color:#444;transform:scaleX(0.9513);">DMAS 225</span>
<svg class="a" style="left:370.70px;top:352.30px;" width="9.3" height="6" viewBox="0 0 9.3 6"><path d="M1,1 L4.65,4.6 L8.3,1" fill="none" stroke="#333" stroke-width="1.8"/></svg>
<div class="a" style="left:1246px;top:341px;width:80px;height:24px;background:#00c834;border-radius:3px;"></div>
<span class="t" id="t31" style="left:1274.60px;top:347.05px;font-size:11.00px;font-weight:400;color:#fff;transform:scaleX(0.8932);-webkit-text-stroke:0.3px currentColor;">Save</span>
<span class="t" id="t32" style="left:205.30px;top:408.05px;font-size:15.30px;font-weight:700;color:#2a4865;transform:scaleX(0.8414);">Medicaid LTC Communication Form</span>
<div class="a" style="left:205.30px;top:423.00px;width:219.30px;height:1.20px;background:#2a4865;"></div>
<div class="a" style="left:528.00px;top:405.00px;width:1.00px;height:25.00px;background:#d5d5d5;"></div>
<div class="a" style="left:102.00px;top:430.00px;width:1217.00px;height:117.50px;background:#f2f2f2;"></div>
<span class="t" id="t33" style="left:106.70px;top:438.22px;font-size:9.70px;font-weight:400;color:#2c3e50;transform:scaleX(0.9147);-webkit-text-stroke:0.2px currentColor;">Individual Name:</span>
<div class="a" style="left:177.00px;top:454.30px;width:157.00px;height:1.00px;background:#b9c3cb;"></div>
<span class="t" id="t34" style="left:178.80px;top:439.13px;font-size:9.80px;font-weight:400;color:#3b4650;transform:scaleX(0.9010);">Alley,Nathan</span>
<span class="t" id="t35" style="left:106.70px;top:468.22px;font-size:9.70px;font-weight:400;color:#2c3e50;transform:scaleX(0.9092);-webkit-text-stroke:0.2px currentColor;">Provider Name:</span>
<div class="a" style="left:172.00px;top:483.30px;width:157.00px;height:1.00px;background:#b9c3cb;"></div>
<span class="t" id="t36" style="left:173.80px;top:469.13px;font-size:9.80px;font-weight:400;color:#3b4650;transform:scaleX(0.8527);">USA Staging Agency</span>
<span class="t" id="t37" style="left:106.70px;top:497.72px;font-size:9.70px;font-weight:400;color:#2c3e50;transform:scaleX(0.9496);-webkit-text-stroke:0.2px currentColor;">Title:</span>
<div class="a" style="left:131.20px;top:513.00px;width:156.30px;height:1.00px;background:#b9c3cb;"></div>
<span class="t" id="t38" style="left:106.70px;top:526.92px;font-size:9.70px;font-weight:400;color:#2c3e50;transform:scaleX(0.9198);-webkit-text-stroke:0.2px currentColor;">Date:</span>
<div class="a" style="left:131.80px;top:542.50px;width:156.40px;height:1.00px;background:#b9c3cb;"></div>
<span class="t" id="t39" style="left:133.70px;top:526.93px;font-size:9.80px;font-weight:400;color:#3b4650;transform:scaleX(0.9454);">mm / dd / yyyy</span>
<svg class="a" style="left:277.60px;top:528.80px;" width="7.4" height="8" viewBox="0 0 7.4 8"><rect x="0.55" y="1.3" width="6.3" height="6.1" fill="none" stroke="#222" stroke-width="1.1"/><rect x="0.55" y="1.3" width="6.3" height="1.9" fill="#222"/><rect x="1.6" y="0" width="1" height="1.6" fill="#222"/><rect x="4.8" y="0" width="1" height="1.6" fill="#222"/></svg>
<span class="t" id="t40" style="left:511.80px;top:438.22px;font-size:9.70px;font-weight:400;color:#2c3e50;transform:scaleX(0.9251);-webkit-text-stroke:0.2px currentColor;">Medicaid ID#:</span>
<div class="a" style="left:571.00px;top:454.30px;width:156.40px;height:1.00px;background:#b9c3cb;"></div>
<span class="t" id="t41" style="left:572.80px;top:439.13px;font-size:9.80px;font-weight:400;color:#3b4650;transform:scaleX(0.8818);">medicaid test 2</span>
<span class="t" id="t42" style="left:511.80px;top:468.22px;font-size:9.70px;font-weight:400;color:#2c3e50;transform:scaleX(0.9238);-webkit-text-stroke:0.2px currentColor;">Provider NPI#:</span>
<div class="a" style="left:573.60px;top:483.30px;width:157.80px;height:1.00px;background:#b9c3cb;"></div>
<span class="t" id="t43" style="left:511.80px;top:497.72px;font-size:9.70px;font-weight:400;color:#2c3e50;transform:scaleX(0.9049);-webkit-text-stroke:0.2px currentColor;">Telephone:</span>
<div class="a" style="left:559.00px;top:513.00px;width:156.50px;height:1.00px;background:#b9c3cb;"></div>
<span class="t" id="t44" style="left:511.80px;top:526.92px;font-size:9.70px;font-weight:400;color:#2c3e50;transform:scaleX(0.9023);-webkit-text-stroke:0.2px currentColor;">Address:</span>
<div class="a" style="left:550.00px;top:542.50px;width:397.60px;height:1.00px;background:#b9c3cb;"></div>
<span class="t" id="t45" style="left:551.80px;top:527.83px;font-size:9.80px;font-weight:400;color:#3b4650;transform:scaleX(0.8720);">IT Park Rd, Netsmartz House, CHANDIGARH, Haryana, 160101</span>
<span class="t" id="t46" style="left:917.60px;top:438.22px;font-size:9.70px;font-weight:400;color:#2c3e50;transform:scaleX(0.7956);-webkit-text-stroke:0.2px currentColor;">SSN:</span>
<div class="a" style="left:940.00px;top:454.30px;width:156.60px;height:1.00px;background:#b9c3cb;"></div>
<span class="t" id="t47" style="left:940.70px;top:439.13px;font-size:9.80px;font-weight:400;color:#3b4650;transform:scaleX(0.9000);">XXX-XX-3123</span>
<span class="t" id="t48" style="left:917.60px;top:468.22px;font-size:9.70px;font-weight:400;color:#2c3e50;transform:scaleX(0.9092);-webkit-text-stroke:0.2px currentColor;">Provider Rep.:</span>
<div class="a" style="left:977.30px;top:483.30px;width:156.60px;height:1.00px;background:#b9c3cb;"></div>
<span class="t" id="t49" style="left:917.60px;top:497.72px;font-size:9.70px;font-weight:400;color:#2c3e50;transform:scaleX(0.8650);-webkit-text-stroke:0.2px currentColor;">Fax:</span>
<div class="a" style="left:938.30px;top:513.00px;width:156.60px;height:1.00px;background:#b9c3cb;"></div>
<span class="t" id="t50" style="left:107.00px;top:573.34px;font-size:12.00px;font-weight:700;color:#1d3a5a;font-style:italic;transform:scaleX(0.9820);">Patient Information:</span>
<div class="a" style="left:107.00px;top:585.20px;width:111.30px;height:1.00px;background:#1d3a5a;"></div>
<span class="t" id="t51" style="left:220.00px;top:574.65px;font-size:10.00px;font-weight:400;color:#3b4650;transform:scaleX(0.8902);">DMAS-96</span>
<div class="a cb" style="left:264.50px;top:570.60px;width:11px;height:11px;"></div>
<span class="t" id="t52" style="left:284.40px;top:573.25px;font-size:10.00px;font-weight:400;color:#3b4650;transform:scaleX(0.8756);">attached</span>
<div class="a cb" style="left:323.60px;top:570.60px;width:11px;height:11px;"></div>
<span class="t" id="t53" style="left:343.80px;top:573.25px;font-size:10.00px;font-weight:400;color:#3b4650;transform:scaleX(0.8674);">unavailable</span>
<div class="a cb" style="left:103.20px;top:595.00px;width:11px;height:11px;"></div>
<span class="t" id="t54" style="left:124.40px;top:598.85px;font-size:10.00px;font-weight:400;color:#3b4650;transform:scaleX(0.8823);">Individual admitted to this facility/service on</span>
<div class="a" style="left:298.70px;top:614.90px;width:120.70px;height:1.00px;background:#b9c3cb;"></div>
<span class="t" id="t55" style="left:300.60px;top:598.83px;font-size:9.80px;font-weight:400;color:#3b4650;transform:scaleX(0.9454);">mm / dd / yyyy</span>
<svg class="a" style="left:408.80px;top:600.70px;" width="7.4" height="8" viewBox="0 0 7.4 8"><rect x="0.55" y="1.3" width="6.3" height="6.1" fill="none" stroke="#222" stroke-width="1.1"/><rect x="0.55" y="1.3" width="6.3" height="1.9" fill="#222"/><rect x="1.6" y="0" width="1" height="1.6" fill="#222"/><rect x="4.8" y="0" width="1" height="1.6" fill="#222"/></svg>
<span class="t" id="t56" style="left:425.40px;top:598.85px;font-size:10.00px;font-weight:400;color:#3b4650;transform:scaleX(0.8610);">(date) , from</span>
<div class="a cb" style="left:479.70px;top:595.00px;width:11px;height:11px;"></div>
<span class="t" id="t57" style="left:500.00px;top:598.85px;font-size:10.00px;font-weight:400;color:#3b4650;transform:scaleX(0.8618);">Home</span>
<div class="a cb" style="left:530.60px;top:595.00px;width:11px;height:11px;"></div>
<span class="t" id="t58" style="left:550.60px;top:598.85px;font-size:10.00px;font-weight:400;color:#3b4650;transform:scaleX(0.8799);">Hospital</span>
<div class="a cb" style="left:590.30px;top:595.00px;width:11px;height:11px;"></div>
<span class="t" id="t59" style="left:610.90px;top:598.85px;font-size:10.00px;font-weight:400;color:#3b4650;transform:scaleX(0.8980);">Other Facility</span>
<div class="a cb" style="left:103.20px;top:625.90px;width:11px;height:11px;"></div>
<span class="t" id="t60" style="left:124.40px;top:628.75px;font-size:10.00px;font-weight:400;color:#3b4650;transform:scaleX(0.8709);">Patient Pay determination requested</span>
<div class="a cb" style="left:272.30px;top:625.90px;width:11px;height:11px;"></div>
<span class="t" id="t61" style="left:293.30px;top:628.75px;font-size:10.00px;font-weight:400;color:#3b4650;transform:scaleX(0.8500);">Patient Funds Account balance</span>
<div class="a" style="left:417.00px;top:644.60px;width:119.80px;height:1.00px;background:#b9c3cb;"></div>
<span class="t" id="t62" style="left:542.00px;top:628.75px;font-size:10.00px;font-weight:400;color:#3b4650;transform:scaleX(0.8023);">as of</span>
<div class="a" style="left:565.30px;top:645.30px;width:120.60px;height:1.00px;background:#b9c3cb;"></div>
<span class="t" id="t63" style="left:567.20px;top:628.73px;font-size:9.80px;font-weight:400;color:#3b4650;transform:scaleX(0.9454);">mm / dd / yyyy</span>
<svg class="a" style="left:675.30px;top:630.60px;" width="7.4" height="8" viewBox="0 0 7.4 8"><rect x="0.55" y="1.3" width="6.3" height="6.1" fill="none" stroke="#222" stroke-width="1.1"/><rect x="0.55" y="1.3" width="6.3" height="1.9" fill="#222"/><rect x="1.6" y="0" width="1" height="1.6" fill="#222"/><rect x="4.8" y="0" width="1" height="1.6" fill="#222"/></svg>
<span class="t" id="t64" style="left:691.80px;top:628.75px;font-size:10.00px;font-weight:400;color:#3b4650;transform:scaleX(0.8584);">date.</span>
<div class="a cb" style="left:103.20px;top:655.80px;width:11px;height:11px;"></div>
<span class="t" id="t65" style="left:124.40px;top:659.15px;font-size:10.00px;font-weight:400;color:#3b4650;transform:scaleX(0.8664);">Individual discharged</span>
<div class="a" style="left:211.70px;top:674.80px;width:120.20px;height:1.00px;background:#b9c3cb;"></div>
<span class="t" id="t66" style="left:213.60px;top:659.13px;font-size:9.80px;font-weight:400;color:#3b4650;transform:scaleX(0.9454);">mm / dd / yyyy</span>
<svg class="a" style="left:321.30px;top:661.00px;" width="7.4" height="8" viewBox="0 0 7.4 8"><rect x="0.55" y="1.3" width="6.3" height="6.1" fill="none" stroke="#222" stroke-width="1.1"/><rect x="0.55" y="1.3" width="6.3" height="1.9" fill="#222"/><rect x="1.6" y="0" width="1" height="1.6" fill="#222"/><rect x="4.8" y="0" width="1" height="1.6" fill="#222"/></svg>
<span class="t" id="t67" style="left:337.80px;top:659.15px;font-size:10.00px;font-weight:400;color:#3b4650;transform:scaleX(0.8536);">(date)</span>
<div class="a cb" style="left:368.10px;top:655.80px;width:11px;height:11px;"></div>
<span class="t" id="t68" style="left:388.30px;top:659.15px;font-size:10.00px;font-weight:400;color:#3b4650;transform:scaleX(0.8543);">Home</span>
<div class="a cb" style="left:418.80px;top:655.80px;width:11px;height:11px;"></div>
<span class="t" id="t69" style="left:438.80px;top:659.15px;font-size:10.00px;font-weight:400;color:#3b4650;transform:scaleX(0.8799);">Hospital</span>
<div class="a cb" style="left:478.50px;top:655.80px;width:11px;height:11px;"></div>
<span class="t" id="t70" style="left:499.10px;top:659.15px;font-size:10.00px;font-weight:400;color:#3b4650;transform:scaleX(0.8997);">Other Facility</span>
<div class="a cb" style="left:558.50px;top:655.80px;width:11px;height:11px;"></div>
<span class="t" id="t71" style="left:579.40px;top:659.15px;font-size:10.00px;font-weight:400;color:#3b4650;transform:scaleX(0.8305);">Deceased</span>
<div class="a cb" style="left:103.20px;top:686.20px;width:11px;height:11px;"></div>
<span class="t" id="t72" style="left:124.40px;top:688.95px;font-size:10.00px;font-weight:400;color:#3b4650;transform:scaleX(0.8509);">Change in income, deductions, health insurance or other:</span>
<div class="a" style="left:346.10px;top:704.50px;width:120.20px;height:1.00px;background:#b9c3cb;"></div>
<span class="t" id="t73" style="left:473.00px;top:688.95px;font-size:10.00px;font-weight:400;color:#3b4650;transform:scaleX(0.7976);">RUGS Score</span>
<div class="a" style="left:525.60px;top:704.50px;width:120.00px;height:1.00px;background:#b9c3cb;"></div>
<span class="t" id="t74" style="left:659.70px;top:688.95px;font-size:10.00px;font-weight:400;color:#3b4650;transform:scaleX(0.8599);">(NF individuals only)</span>
<span class="t" id="t75" style="left:107.10px;top:712.25px;font-size:10.00px;font-weight:400;color:#3b4650;transform:scaleX(0.8658);">*Individual Residential Address:</span>
<span class="t" id="t76" style="left:107.10px;top:736.25px;font-size:10.00px;font-weight:400;color:#3b4650;transform:scaleX(0.8475);">Medicaid Per Diem Rate:</span>
<div class="a" style="left:207.10px;top:751.10px;width:120.90px;height:1.00px;background:#b9c3cb;"></div>
<span class="t" id="t77" style="left:333.80px;top:736.25px;font-size:10.00px;font-weight:400;color:#3b4650;transform:scaleX(0.8453);">*Enrollee FIPS:</span>
<div class="a" style="left:397.30px;top:751.10px;width:120.90px;height:1.00px;background:#b9c3cb;"></div>
<span class="t" id="t78" style="left:532.40px;top:736.25px;font-size:10.00px;font-weight:400;color:#3b4650;transform:scaleX(0.8747);">(Waiver Individuals Only)</span>
<span class="t" id="t79" style="left:107.10px;top:766.45px;font-size:10.00px;font-weight:400;color:#3b4650;transform:scaleX(0.8553);">CBC Provider Hourly Rate:</span>
<div class="a" style="left:215.10px;top:781.30px;width:120.90px;height:1.00px;background:#b9c3cb;"></div>
<span class="t" id="t80" style="left:342.70px;top:766.45px;font-size:10.00px;font-weight:400;color:#3b4650;transform:scaleX(0.8615);">Hours received in the month of Discharge:</span>
<div class="a" style="left:509.30px;top:781.30px;width:120.90px;height:1.00px;background:#b9c3cb;"></div>
<span class="t" id="t81" style="left:107.10px;top:789.65px;font-size:10.00px;font-weight:400;color:#3b4650;transform:scaleX(0.8548);">If discharging from services, please include all Service Authorization #(s):</span>
<div class="a" style="left:101.50px;top:825.00px;width:1217.00px;height:58.80px;background:#f2f2f2;"></div>
<span class="t" id="t82" style="left:107.10px;top:832.95px;font-size:10.00px;font-weight:400;color:#2c3e50;transform:scaleX(0.7680);-webkit-text-stroke:0.2px currentColor;">LDSS:</span>
<div class="a" style="left:133.80px;top:848.00px;width:105.30px;height:1.00px;background:#b9c3cb;"></div>
<span class="t" id="t83" style="left:107.10px;top:862.05px;font-size:10.00px;font-weight:400;color:#2c3e50;transform:scaleX(0.8623);-webkit-text-stroke:0.2px currentColor;">Telephone:</span>
<div class="a" style="left:153.80px;top:877.80px;width:105.80px;height:1.00px;background:#b9c3cb;"></div>
<span class="t" id="t84" style="left:490.20px;top:832.95px;font-size:10.00px;font-weight:400;color:#2c3e50;transform:scaleX(0.8162);-webkit-text-stroke:0.2px currentColor;">FIPS Code:</span>
<div class="a" style="left:536.90px;top:848.00px;width:105.80px;height:1.00px;background:#b9c3cb;"></div>
<span class="t" id="t85" style="left:490.20px;top:862.05px;font-size:10.00px;font-weight:400;color:#2c3e50;transform:scaleX(0.8688);-webkit-text-stroke:0.2px currentColor;">Fax:</span>
<div class="a" style="left:510.70px;top:877.80px;width:105.30px;height:1.00px;background:#b9c3cb;"></div>
<span class="t" id="t86" style="left:870.90px;top:832.75px;font-size:10.00px;font-weight:400;color:#2c3e50;transform:scaleX(0.9255);-webkit-text-stroke:0.2px currentColor;">Eligibility Worker:</span>
<div class="a" style="left:946.60px;top:848.00px;width:106.30px;height:1.00px;background:#b9c3cb;"></div>
<span class="t" id="t87" style="left:870.90px;top:861.85px;font-size:10.00px;font-weight:400;color:#2c3e50;transform:scaleX(0.9119);-webkit-text-stroke:0.2px currentColor;">Date:</span>
<div class="a" style="left:896.60px;top:878.00px;width:87.40px;height:1.00px;background:#b9c3cb;"></div>
<span class="t" id="t88" style="left:898.50px;top:861.83px;font-size:9.80px;font-weight:400;color:#3b4650;transform:scaleX(0.9454);">mm / dd / yyyy</span>
<svg class="a" style="left:975.40px;top:863.70px;" width="7.4" height="8" viewBox="0 0 7.4 8"><rect x="0.55" y="1.3" width="6.3" height="6.1" fill="none" stroke="#222" stroke-width="1.1"/><rect x="0.55" y="1.3" width="6.3" height="1.9" fill="#222"/><rect x="1.6" y="0" width="1" height="1.6" fill="#222"/><rect x="4.8" y="0" width="1" height="1.6" fill="#222"/></svg>
<span class="t" id="t89" style="left:101.90px;top:903.09px;font-size:12.50px;font-weight:700;color:#1d3a5a;font-style:italic;transform:scaleX(0.9458);">Eligibility Information:</span>
<div class="a" style="left:101.90px;top:915.90px;width:124.80px;height:1.00px;background:#1d3a5a;"></div>
<span class="t" id="t90" style="left:105.80px;top:925.85px;font-size:10.00px;font-weight:400;color:#3b4650;transform:scaleX(0.8638);">Eligible, full Medicaid services beginning</span>
<div class="a" style="left:264.80px;top:942.70px;width:122.40px;height:1.00px;background:#b9c3cb;"></div>
<span class="t" id="t91" style="left:266.70px;top:925.83px;font-size:9.80px;font-weight:400;color:#3b4650;transform:scaleX(0.9454);">mm / dd / yyyy</span>
<svg class="a" style="left:376.60px;top:927.70px;" width="7.4" height="8" viewBox="0 0 7.4 8"><rect x="0.55" y="1.3" width="6.3" height="6.1" fill="none" stroke="#222" stroke-width="1.1"/><rect x="0.55" y="1.3" width="6.3" height="1.9" fill="#222"/><rect x="1.6" y="0" width="1" height="1.6" fill="#222"/><rect x="4.8" y="0" width="1" height="1.6" fill="#222"/></svg>
<div class="a cb" style="left:397.20px;top:922.40px;width:11px;height:11px;"></div>
<span class="t" id="t92" style="left:418.00px;top:925.85px;font-size:10.00px;font-weight:400;color:#3b4650;transform:scaleX(0.8691);">Eligible, QMB Medicaid only</span>
<div class="a cb" style="left:103.00px;top:948.90px;width:11px;height:11px;"></div>
<span class="t" id="t93" style="left:122.80px;top:951.65px;font-size:10.00px;font-weight:400;color:#3b4650;transform:scaleX(0.8668);">Eligible Medicare premium payment only</span>
<div class="a cb" style="left:103.00px;top:972.20px;width:11px;height:11px;"></div>
<span class="t" id="t94" style="left:124.30px;top:974.85px;font-size:10.00px;font-weight:400;color:#3b4650;transform:scaleX(0.8830);">Ineligible for Medicaid</span>
<div class="a cb" style="left:216.70px;top:972.20px;width:11px;height:11px;"></div>
<span class="t" id="t95" style="left:237.50px;top:974.85px;font-size:10.00px;font-weight:400;color:#3b4650;transform:scaleX(0.8615);">Ineligible for Medicaid payment of LTC services from</span>
<div class="a" style="left:442.30px;top:991.00px;width:122.00px;height:1.00px;background:#b9c3cb;"></div>
<span class="t" id="t96" style="left:444.20px;top:974.83px;font-size:9.80px;font-weight:400;color:#3b4650;transform:scaleX(0.9454);">mm / dd / yyyy</span>
<svg class="a" style="left:553.70px;top:976.70px;" width="7.4" height="8" viewBox="0 0 7.4 8"><rect x="0.55" y="1.3" width="6.3" height="6.1" fill="none" stroke="#222" stroke-width="1.1"/><rect x="0.55" y="1.3" width="6.3" height="1.9" fill="#222"/><rect x="1.6" y="0" width="1" height="1.6" fill="#222"/><rect x="4.8" y="0" width="1" height="1.6" fill="#222"/></svg>
<span class="t" id="t97" style="left:585.30px;top:974.85px;font-size:10.00px;font-weight:400;color:#3b4650;transform:scaleX(0.9948);">to</span>
<div class="a" style="left:606.70px;top:991.00px;width:121.00px;height:1.00px;background:#b9c3cb;"></div>
<span class="t" id="t98" style="left:608.60px;top:974.83px;font-size:9.80px;font-weight:400;color:#3b4650;transform:scaleX(0.9454);">mm / dd / yyyy</span>
<svg class="a" style="left:717.10px;top:976.70px;" width="7.4" height="8" viewBox="0 0 7.4 8"><rect x="0.55" y="1.3" width="6.3" height="6.1" fill="none" stroke="#222" stroke-width="1.1"/><rect x="0.55" y="1.3" width="6.3" height="1.9" fill="#222"/><rect x="1.6" y="0" width="1" height="1.6" fill="#222"/><rect x="4.8" y="0" width="1" height="1.6" fill="#222"/></svg>
<div class="a cb" style="left:103.00px;top:1002.90px;width:11px;height:11px;"></div>
<span class="t" id="t99" style="left:124.30px;top:1005.35px;font-size:10.00px;font-weight:400;color:#3b4650;transform:scaleX(0.8652);">Medicare Part A insurance</span>
<span class="t" id="t100" style="left:234.00px;top:1005.35px;font-size:10.00px;font-weight:400;color:#3b4650;transform:scaleX(0.8687);">Other health insurance:</span>
<div class="a" style="left:327.70px;top:1020.70px;width:105.90px;height:1.00px;background:#b9c3cb;"></div>
<span class="t" id="t101" style="left:439.90px;top:1005.35px;font-size:10.00px;font-weight:400;color:#3b4650;transform:scaleX(0.8352);">LTC insurance</span>
<div class="a" style="left:497.00px;top:1020.70px;width:106.30px;height:1.00px;background:#b9c3cb;"></div>
<div class="a cb" style="left:103.00px;top:1032.20px;width:11px;height:11px;"></div>
<span class="t" id="t102" style="left:124.30px;top:1034.65px;font-size:10.00px;font-weight:400;color:#3b4650;transform:scaleX(0.8567);">Change in deductions, health insurance or other</span>
<div class="a" style="left:318.90px;top:1050.00px;width:106.40px;height:1.00px;background:#b9c3cb;"></div>
<div class="a" style="left:1307px;top:1115px;width:38px;height:38px;border-radius:50%;background:#0379cd;box-shadow:0 2px 6px rgba(0,0,0,0.18);z-index:6;"></div>
<svg class="a" style="left:1317.00px;top:1124.00px;z-index:7;" width="17.2" height="19.2" viewBox="0 0 17.2 19.2"><path d="M0,2 Q0,0 2,0 L15.2,0 Q17.2,0 17.2,2 L17.2,19.2 L12.5,17 L2,17 Q0,17 0,15 Z" fill="#fff"/><path d="M2.8,12.4 Q8.6,15.6 14.4,12.4" fill="none" stroke="#0379cd" stroke-width="1.2"/></svg>
<span class="t" id="t103" style="left:585.30px;top:1144.15px;font-size:10.00px;font-weight:400;color:#8f8f8f;transform:scaleX(0.8665);">© Copyright 2024, Developed and Maintained By</span>
<span class="t" id="t104" style="left:775.60px;top:1144.15px;font-size:10.00px;font-weight:400;color:#34495e;transform:scaleX(0.8653);">CareSmartz360</span>
</body></html>
